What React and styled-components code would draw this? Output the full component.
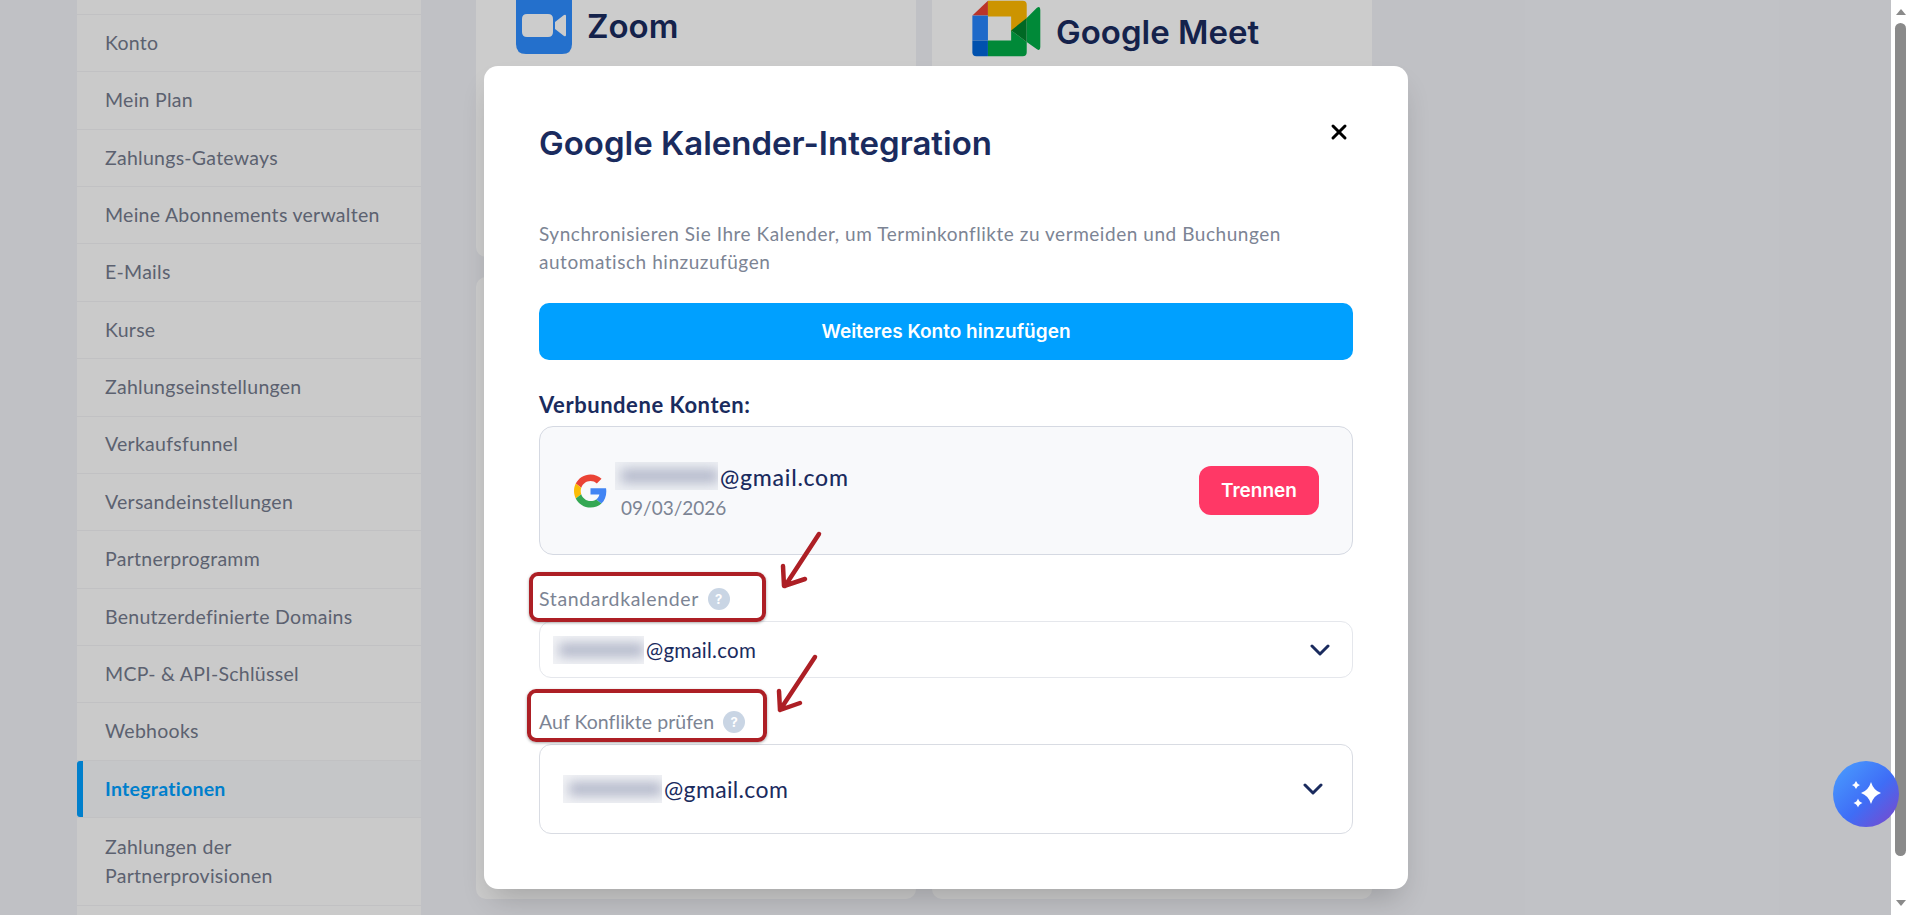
import React from 'react';
import styled, { createGlobalStyle } from 'styled-components';
import { X } from 'lucide-react';

const GlobalStyle = createGlobalStyle`
	* {
		box-sizing: border-box;
	}
	html, body {
		margin: 0;
		height: 100%;
		overflow: hidden;
	}
	body {
		font-family: Lato, "Noto Sans", sans-serif;
		color: #1a2b5e;
	}
`;

const Viewport = styled.div`
	display: flex;
	width: 1910px;
	height: 915px;
	overflow: hidden;
	position: relative;
	background: #fff;
`;

const Page = styled.div`
	display: flex;
	flex: 1;
	gap: 55px;
	padding-left: 77px;
	height: 915px;
	overflow: hidden;
	position: relative;
	background: #f1f2f7;
`;

const Sidebar = styled.nav`
	width: 344px;
	flex-shrink: 0;
	margin-top: -42.6px;
	background: #fdfdfd;
`;

const NavItem = styled.div`
	position: relative;
	display: flex;
	align-items: center;
	min-height: 57.4px;
	padding: ${props => (props.$tall ? '15px' : '0')} 20px ${props => (props.$tall ? '15px' : '0')} 28px;
	border-bottom: 1px solid #f2f2f4;
	font-size: 19.5px;
	line-height: 28.5px;
	letter-spacing: 0.27px;
	color: ${props => (props.$active ? '#009fff' : '#737a8c')};
	font-weight: ${props => (props.$active ? 700 : 400)};
	background: ${props => (props.$active ? '#f7f8fb' : 'transparent')};

	${props => props.$active && `
		&::before {
			content: '';
			position: absolute;
			left: 0;
			top: 0;
			bottom: 0;
			width: 6px;
			border-radius: 3px 0 0 3px;
			background: #009fff;
		}
	`}
`;

const CardGrid = styled.div`
	display: grid;
	grid-template-columns: 440px 440px;
	grid-template-rows: 297px 622px;
	gap: 20px 16px;
	margin-top: -40px;
	height: 939px;
`;

const Card = styled.div`
	display: flex;
	align-items: flex-start;
	gap: ${props => props.$gap}px;
	padding: 40px;
	border-radius: 10px;
	background: #fff;
`;

const Brand = styled.div`
	font-family: Inter, sans-serif;
	font-weight: 600;
	font-size: ${props => props.$size}px;
	line-height: ${props => props.$line}px;
	color: #1a2b5e;
`;

const Backdrop = styled.div`
	position: absolute;
	inset: 0;
	background: rgba(0, 0, 0, 0.2);
`;

const Modal = styled.section`
	position: absolute;
	left: 484px;
	top: 66px;
	width: 924px;
	height: 823px;
	padding: 57px 55px 56px 55px;
	border-radius: 14px;
	background: #fff;
	box-shadow: 0 16px 30px -8px rgba(0, 0, 0, 0.2);
`;

const Title = styled.h2`
	margin: 0;
	font-family: Inter, sans-serif;
	font-weight: 600;
	font-size: 33px;
	line-height: 40px;
	color: #1a2b5e;
`;

const CloseButton = styled.div`
	position: absolute;
	left: 843px;
	top: 54px;
	width: 24px;
	height: 24px;
	color: #000;
`;

const Description = styled.p`
	margin: 57px 0 27px;
	font-size: 19px;
	line-height: 28px;
	letter-spacing: 0.54px;
	color: #7c8494;
`;

const PrimaryButton = styled.div`
	display: flex;
	align-items: center;
	justify-content: center;
	height: 57px;
	border-radius: 10px;
	background: #00a0ff;
	color: #fff;
	font-family: Inter, sans-serif;
	font-weight: 600;
	font-size: 19px;
`;

const SectionHeading = styled.h3`
	margin: 31px 0 7px;
	font-size: 22px;
	line-height: 28px;
	font-weight: 700;
	letter-spacing: 0.55px;
	color: #1a2b5e;
`;

const AccountCard = styled.div`
	display: flex;
	align-items: center;
	height: 129px;
	padding: 0 33px 0 34px;
	border: 1px solid #d5d9e2;
	border-radius: 14px;
	background: #f8f9fb;
`;

const AccountInfo = styled.div`
	flex: 1;
	margin-left: 8px;
`;

const EmailRow = styled.div`
	display: flex;
	align-items: center;
	font-size: ${props => props.$size}px;
	font-weight: ${props => props.$weight || 400};
	letter-spacing: ${props => props.$spacing}px;
	line-height: 28px;
	color: #1a2b5e;
`;

const EmailDomain = styled.span`
	margin-top: ${props => props.$shift}px;
`;

const Redacted = styled.span`
	display: block;
	position: relative;
	overflow: hidden;
	flex-shrink: 0;
	width: ${props => props.$width}px;
	height: 28px;
	margin-right: 2px;
	background: ${props => props.$bg || '#f2f3f6'};

	&::after {
		content: '';
		position: absolute;
		left: 6px;
		right: 0;
		top: 7px;
		height: 14px;
		background: #b3b8ca;
		filter: blur(6px);
	}
`;

const DateText = styled.div`
	margin: 4px 0 0 6px;
	font-size: 19px;
	line-height: 26px;
	color: #7c8494;
`;

const DangerButton = styled.div`
	display: flex;
	align-items: center;
	justify-content: center;
	width: 120px;
	height: 49px;
	border-radius: 12px;
	background: #ff3866;
	color: #fff;
	font-family: Inter, sans-serif;
	font-weight: 600;
	font-size: 19px;
`;

const FieldLabel = styled.div`
	display: flex;
	align-items: center;
	gap: 9px;
	margin: 32px 0 10px;
	height: 24px;
	font-size: 19.5px;
	line-height: 24px;
	letter-spacing: ${props => props.$spacing}px;
	color: #7c8494;
`;

const HelpDot = styled.span`
	display: flex;
	align-items: center;
	justify-content: center;
	width: 22px;
	height: 22px;
	border-radius: 50%;
	background: #c9d5e4;
	color: #fff;
	font-family: Inter, sans-serif;
	font-size: 13px;
	font-weight: 700;
`;

const SelectBox = styled.div`
	display: flex;
	align-items: center;
	justify-content: space-between;
	height: ${props => props.$height}px;
	padding: 0 ${props => props.$right}px 0 ${props => props.$left}px;
	border: 1px solid ${props => props.$border};
	border-radius: 12px;
	background: #fff;
`;

const Annotation = styled.div`
	position: absolute;
	left: ${props => props.$left}px;
	top: ${props => props.$top}px;
	width: ${props => props.$width}px;
	height: ${props => props.$height}px;
	border: 4px solid #ad1f25;
	border-radius: 9px;
	box-shadow: 0 1px 3px rgba(0, 0, 0, 0.35);
`;

const ArrowMark = styled.svg`
	position: absolute;
	left: ${props => props.$left}px;
	top: ${props => props.$top}px;
	overflow: visible;
`;

const ChatBubble = styled.div`
	position: absolute;
	left: 1833px;
	top: 761px;
	width: 66px;
	height: 66px;
	border-radius: 50%;
	background: linear-gradient(135deg, #4aa0ff 0%, #3f6df6 55%, #7f45c8 100%);
`;

const ScrollTrack = styled.div`
	display: flex;
	flex-direction: column;
	align-items: center;
	width: 19px;
	flex-shrink: 0;
	background: #fff;
`;

const ScrollArrow = styled.span`
	width: 0;
	height: 0;
	margin-top: ${props => props.$top}px;
	border-left: 5px solid transparent;
	border-right: 5px solid transparent;
	${props => (props.$down ? 'border-top' : 'border-bottom')}: 6px solid #8a8a8a;
`;

const ScrollThumb = styled.div`
	width: 11px;
	height: 833px;
	margin-top: 8px;
	border-radius: 6px;
	background: #8a8a8a;
`;

const navItems = [
	'Konto',
	'Mein Plan',
	'Zahlungs-Gateways',
	'Meine Abonnements verwalten',
	'E-Mails',
	'Kurse',
	'Zahlungseinstellungen',
	'Verkaufsfunnel',
	'Versandeinstellungen',
	'Partnerprogramm',
	'Benutzerdefinierte Domains',
	'MCP- & API-Schlüssel',
	'Webhooks',
];

const ZoomLogo = () => (
	<svg width="56" height="54" viewBox="0 0 56 54">
		<path d="M0 -6H56V44Q56 54 46 54H10Q0 54 0 44Z" fill="#2d8cff" />
		<path d="M11 14H32Q37 14 37 19V32Q37 37 32 37H11Q6 37 6 32V19Q6 14 11 14Z" fill="#fff" />
		<path d="M39 22L48 15Q50 14 50 16V35Q50 37 48 36L39 29Z" fill="#fff" />
	</svg>
);

const MeetLogo = () => (
	<svg width="69" height="57" viewBox="38 8 206 172">
		<path d="M38 55L85 10V55Z" fill="#ea4335" />
		<path d="M85 10H190Q202 10 202 22V70L155 105V58H85Z" fill="#ffba00" />
		<path d="M38 55H85V130H38Z" fill="#2684fc" />
		<path d="M38 130H85V178H50Q38 178 38 166Z" fill="#0066da" />
		<path d="M85 130H155V100L202 135V166Q202 178 190 178H85Z" fill="#00ac47" />
		<path d="M155 100L202 62V135Z" fill="#00832d" />
		<path d="M202 62L232 32Q243 24 243 38V150Q243 164 232 156L202 135Z" fill="#00ac47" />
	</svg>
);

const GoogleG = () => (
	<svg width="33" height="34" viewBox="0 0 48 48">
		<path fill="#EA4335" d="M24 9.5c3.54 0 6.71 1.22 9.21 3.6l6.85-6.85C35.9 2.38 30.47 0 24 0 14.62 0 6.51 5.38 2.56 13.22l7.98 6.19C12.43 13.72 17.74 9.5 24 9.5z" />
		<path fill="#4285F4" d="M46.98 24.55c0-1.57-.15-3.09-.38-4.55H24v9.02h12.94c-.58 2.96-2.26 5.48-4.78 7.18l7.73 6c4.51-4.18 7.09-10.36 7.09-17.65z" />
		<path fill="#FBBC05" d="M10.53 28.59c-.48-1.45-.76-2.99-.76-4.59s.27-3.14.76-4.59l-7.98-6.19C.92 16.46 0 20.12 0 24c0 3.88.92 7.54 2.56 10.78l7.97-6.19z" />
		<path fill="#34A853" d="M24 48c6.48 0 11.93-2.13 15.89-5.81l-7.73-6c-2.15 1.45-4.92 2.3-8.16 2.3-6.26 0-11.57-4.22-13.47-9.91l-7.98 6.19C6.51 42.62 14.62 48 24 48z" />
	</svg>
);

const Chevron = () => (
	<svg width="20" height="12" viewBox="0 0 20 12" fill="none" stroke="#1a2b5e" strokeWidth="3" strokeLinecap="round" strokeLinejoin="round">
		<path d="M2 2L10 10L18 2" />
	</svg>
);

const Arrow = ({ left, top, d }) => (
	<ArrowMark $left={left} $top={top} width="40" height="58" viewBox="0 0 40 58" fill="none" stroke="#ad1f25" strokeWidth="4.5" strokeLinecap="round" strokeLinejoin="round">
		<path d={d} />
	</ArrowMark>
);

const App = () => (
	<Viewport>
		<GlobalStyle />
		<Page>
			<Sidebar>
				<NavItem />
				{navItems.map(item => (
					<NavItem key={item}>{item}</NavItem>
				))}
				<NavItem $active>Integrationen</NavItem>
				<NavItem $tall>Zahlungen der Partnerprovisionen</NavItem>
			</Sidebar>
			<CardGrid>
				<Card $gap={15}>
					<ZoomLogo />
					<Brand $size={33} $line={52}>Zoom</Brand>
				</Card>
				<Card $gap={15}>
					<MeetLogo />
					<Brand $size={33} $line={64}>Google Meet</Brand>
				</Card>
				<Card />
				<Card />
			</CardGrid>
			<Backdrop />
			<Modal>
				<Title>Google Kalender-Integration</Title>
				<CloseButton>
					<X size={24} strokeWidth={3} />
				</CloseButton>
				<Description>
					Synchronisieren Sie Ihre Kalender, um Terminkonflikte zu vermeiden und Buchungen automatisch hinzuzufügen
				</Description>
				<PrimaryButton>Weiteres Konto hinzufügen</PrimaryButton>
				<SectionHeading>Verbundene Konten:</SectionHeading>
				<AccountCard>
					<GoogleG />
					<AccountInfo>
						<EmailRow $size={23} $spacing={0.75} $weight={500}>
							<Redacted $width={103} $bg="#eef0f4" />
							<EmailDomain $shift={3}>@gmail.com</EmailDomain>
						</EmailRow>
						<DateText>09/03/2026</DateText>
					</AccountInfo>
					<DangerButton>Trennen</DangerButton>
				</AccountCard>
				<FieldLabel $spacing={0.65}>
					Standardkalender
					<HelpDot>?</HelpDot>
				</FieldLabel>
				<SelectBox $height={57} $left={13} $right={22} $border="#e5e7ec">
					<EmailRow $size={20.5} $spacing={0.25}>
						<Redacted $width={91} />
						<EmailDomain $shift={1}>@gmail.com</EmailDomain>
					</EmailRow>
					<Chevron />
				</SelectBox>
				<FieldLabel $spacing={0.05}>
					Auf Konflikte prüfen
					<HelpDot>?</HelpDot>
				</FieldLabel>
				<SelectBox $height={90} $left={23} $right={29} $border="#d9dce3">
					<EmailRow $size={23} $spacing={0.35}>
						<Redacted $width={99} />
						<EmailDomain $shift={0}>@gmail.com</EmailDomain>
					</EmailRow>
					<Chevron />
				</SelectBox>
				<Annotation $left={45} $top={506} $width={237} $height={50} />
				<Annotation $left={43} $top={623} $width={240} $height={53} />
				<Arrow left={297} top={466} d="M38 2L4 54M2 34L3 54L24 47" />
				<Arrow left={293} top={589} d="M38 2L3 55M2 36L3 55L23 48" />
			</Modal>
		</Page>
		<ScrollTrack>
			<ScrollArrow $top={9} />
			<ScrollThumb />
			<ScrollArrow $down $top={44} />
		</ScrollTrack>
		<ChatBubble>
			<svg width="66" height="66" viewBox="0 0 66 66" fill="#fff">
				<path d="M38 21Q40.5 29.5 48 32Q40.5 34.5 38 43Q35.5 34.5 28 32Q35.5 29.5 38 21Z" />
				<path d="M23 20Q24 23 27 24Q24 25 23 28Q22 25 19 24Q22 23 23 20Z" />
				<path d="M25 37.500Q26 41 29.500 42Q26 43 25 46.500Q24 43 20.500 42Q24 41 25 37.500Z" />
			</svg>
		</ChatBubble>
	</Viewport>
);

export default App;
